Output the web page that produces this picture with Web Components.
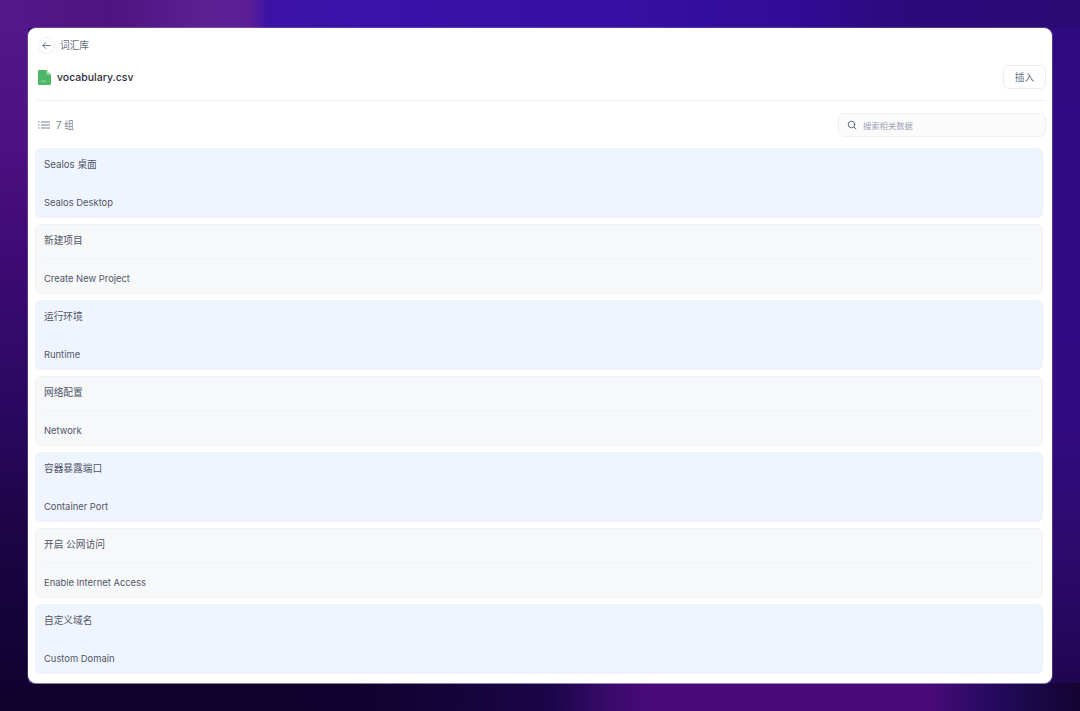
<!DOCTYPE html>
<html lang="zh">
<head>
<meta charset="utf-8">
<title>词汇库</title>
<style>
  html, body { margin: 0; height: 100%; }
  body {
    width: 1080px;
    height: 711px;
    overflow: hidden;
    box-sizing: border-box;
    padding: 28px;
    font-family: Inter, "Noto Sans CJK SC", sans-serif;
    background-color: #2a0870;
    background-repeat: no-repeat;
    background-size: 100% 28px, 100% 28px, 28px 100%, 28px 100%;
    background-position: top, bottom, left, right;
    background-image:
      linear-gradient(90deg, #54188a 0, #4f1480 110px, #5c2194 215px, #5a1f96 250px, #3c12a6 268px, #3a12aa 370px, #3510a2 620px, #300c96 800px, #2a0a7c 900px, #2a0a72 1080px),
      linear-gradient(90deg, #0f022c 0, #10022e 360px, #1a0548 550px, #3a0a6c 610px, #480a78 650px, #480a78 930px, #2a0a64 985px, #1c0850 1020px, #140430 1080px),
      linear-gradient(180deg, #541a8a 0, #4c1080 150px, #3a0a72 280px, #2c0862 400px, #1e0548 520px, #14033a 620px, #0f022c 711px),
      linear-gradient(180deg, #2e0a80 0, #320a84 300px, #320a80 420px, #2e0a6e 540px, #260860 620px, #1c0548 711px);
  }
</style>
</head>
<body>
<vocab-window>
  <back-bar slot="back">词汇库</back-bar>
  <file-bar slot="file" name="vocabulary.csv" action="插入"></file-bar>
  <tool-bar slot="tools" count="7 组" placeholder="搜索相关数据"></tool-bar>
  <data-card tone="blue"><span slot="q">Sealos 桌面</span><span slot="a">Sealos Desktop</span></data-card>
  <data-card><span slot="q">新建项目</span><span slot="a">Create New Project</span></data-card>
  <data-card tone="blue"><span slot="q">运行环境</span><span slot="a">Runtime</span></data-card>
  <data-card><span slot="q">网络配置</span><span slot="a">Network</span></data-card>
  <data-card tone="blue"><span slot="q">容器暴露端口</span><span slot="a">Container Port</span></data-card>
  <data-card><span slot="q">开启 公网访问</span><span slot="a">Enable Internet Access</span></data-card>
  <data-card tone="blue"><span slot="q">自定义域名</span><span slot="a">Custom Domain</span></data-card>
</vocab-window>

<script>
const windowTemplate = document.createElement('template')
windowTemplate.innerHTML = `
  <style>
    :host {
      display: flex;
      flex-direction: column;
      box-sizing: border-box;
      height: 655px;
      background: #fff;
      border-radius: 8px;
      padding: 7px 6px 0 7px;
      box-shadow: 0 0 0 1px rgba(255,255,255,.18), 0 1px 0 rgba(255,255,255,.4);
    }
    .list {
      display: flex;
      flex-direction: column;
      gap: 6px;
      margin-right: 3px;
    }
    ::slotted(data-card) {
      flex: none;
    }
  </style>
  <slot name="back"></slot>
  <slot name="file"></slot>
  <slot name="tools"></slot>
  <div class="list"><slot></slot></div>
`
customElements.define('vocab-window', class extends HTMLElement {
  constructor() {
    super()
    this.attachShadow({ mode: 'open' }).appendChild(windowTemplate.content.cloneNode(true))
  }
})

const backTemplate = document.createElement('template')
backTemplate.innerHTML = `
  <style>
    :host {
      display: flex;
      align-items: center;
      gap: 5px;
      height: 20px;
      padding-left: 3px;
      font-size: 9.700px;
      color: #5f6b7a;
    }
    .btn {
      display: flex;
      align-items: center;
      justify-content: center;
      box-sizing: border-box;
      width: 17px;
      height: 17px;
      border-radius: 50%;
      border: 1px solid #eceef2;
    }
  </style>
  <span class="btn">
    <svg width="11" height="11" viewBox="0 0 12 12" fill="none" stroke="#667085" stroke-width="1" stroke-linecap="round" stroke-linejoin="round">
      <path d="M10 6H2M5.200 2.800 2 6l3.200 3.200"/>
    </svg>
  </span>
  <slot></slot>
`
customElements.define('back-bar', class extends HTMLElement {
  constructor() {
    super()
    this.attachShadow({ mode: 'open' }).appendChild(backTemplate.content.cloneNode(true))
  }
})

const fileTemplate = document.createElement('template')
fileTemplate.innerHTML = `
  <style>
    :host {
      display: flex;
      align-items: center;
      justify-content: space-between;
      box-sizing: border-box;
      height: 46px;
      margin-left: 2px;
      padding-left: 1px;
      border-bottom: 1px solid #eef0f3;
    }
    .name {
      display: flex;
      align-items: center;
      gap: 6px;
      font-size: 10.500px;
      font-weight: 500;
      color: #2a2d3c;
    }
    button {
      box-sizing: border-box;
      width: 43px;
      height: 24px;
      margin-bottom: 2px;
      padding: 0;
      font: inherit;
      font-size: 9.700px;
      color: #667085;
      background: #fff;
      border: 1px solid #eaecf2;
      border-radius: 6px;
    }
  </style>
  <span class="name">
    <svg width="13" height="15" viewBox="0 0 13 15">
      <path d="M1 0H8.500L13 4.500V14a1 1 0 0 1-1 1H1a1 1 0 0 1-1-1V1a1 1 0 0 1 1-1Z" fill="#4fb868"/>
      <path d="M8.500 0 13 4.500H9.500a1 1 0 0 1-1-1Z" fill="#a5dcb2"/>
      <path d="M3 11.200h5" stroke="#a5dcb2" stroke-width="1"/>
    </svg>
    <span id="name"></span>
  </span>
  <button id="action"></button>
`
customElements.define('file-bar', class extends HTMLElement {
  constructor() {
    super()
    this.attachShadow({ mode: 'open' }).appendChild(fileTemplate.content.cloneNode(true))
    this.shadowRoot.querySelector('#name').textContent = this.getAttribute('name')
    this.shadowRoot.querySelector('#action').textContent = this.getAttribute('action')
  }
})

const toolTemplate = document.createElement('template')
toolTemplate.innerHTML = `
  <style>
    :host {
      display: flex;
      align-items: center;
      justify-content: space-between;
      box-sizing: border-box;
      height: 47px;
      padding: 1px 0 0 3px;
    }
    .count {
      display: flex;
      align-items: center;
      gap: 6px;
      font-size: 9.700px;
      color: #7a8494;
    }
    .search {
      display: flex;
      align-items: center;
      gap: 6px;
      box-sizing: border-box;
      width: 208px;
      height: 24px;
      padding-left: 8px;
      background: #fbfbfc;
      border: 1px solid #eef0f4;
      border-radius: 6px;
      font-size: 8.300px;
      color: #9aa3b2;
    }
  </style>
  <span class="count">
    <svg width="12" height="8" viewBox="0 0 12 8" fill="none" stroke="#7a8494" stroke-width="1">
      <path d="M3 1h9M3 4h9M3 7h9"/>
      <path d="M0 1h1.500M0 4h1.500M0 7h1.500"/>
    </svg>
    <span id="count"></span>
  </span>
  <span class="search">
    <svg width="10" height="10" viewBox="0 0 10 10" fill="none" stroke="#5f6b7a" stroke-width="1" stroke-linecap="round">
      <circle cx="4.500" cy="4.500" r="3.300"/>
      <path d="M7 7l2 2"/>
    </svg>
    <span id="placeholder"></span>
  </span>
`
customElements.define('tool-bar', class extends HTMLElement {
  constructor() {
    super()
    this.attachShadow({ mode: 'open' }).appendChild(toolTemplate.content.cloneNode(true))
    this.shadowRoot.querySelector('#count').textContent = this.getAttribute('count')
    this.shadowRoot.querySelector('#placeholder').textContent = this.getAttribute('placeholder')
  }
})

const cardTemplate = document.createElement('template')
cardTemplate.innerHTML = `
  <style>
    :host {
      display: flex;
      flex-direction: column;
      box-sizing: border-box;
      height: 70px;
      padding: 0 8px;
      background: #f7f8fa;
      border: 1px solid #f0f1f4;
      border-radius: 6px;
      font-size: 9.700px;
      color: #4f5666;
    }
    :host([tone=blue]) {
      background: #f0f4fe;
      border-color: #eef2fc;
    }
    .row {
      flex: 1;
      display: flex;
      align-items: center;
      box-sizing: border-box;
    }
    .q {
      padding-bottom: 3px;
    }
    .a {
      padding-top: 4px;
      font-size: 9.400px;
      border-top: 1px solid #f1f2f5;
    }
    :host([tone=blue]) .a {
      border-top-color: #edf0fa;
    }
  </style>
  <div class="row q"><slot name="q"></slot></div>
  <div class="row a"><slot name="a"></slot></div>
`
customElements.define('data-card', class extends HTMLElement {
  constructor() {
    super()
    this.attachShadow({ mode: 'open' }).appendChild(cardTemplate.content.cloneNode(true))
  }
})
</script>
</body>
</html>
